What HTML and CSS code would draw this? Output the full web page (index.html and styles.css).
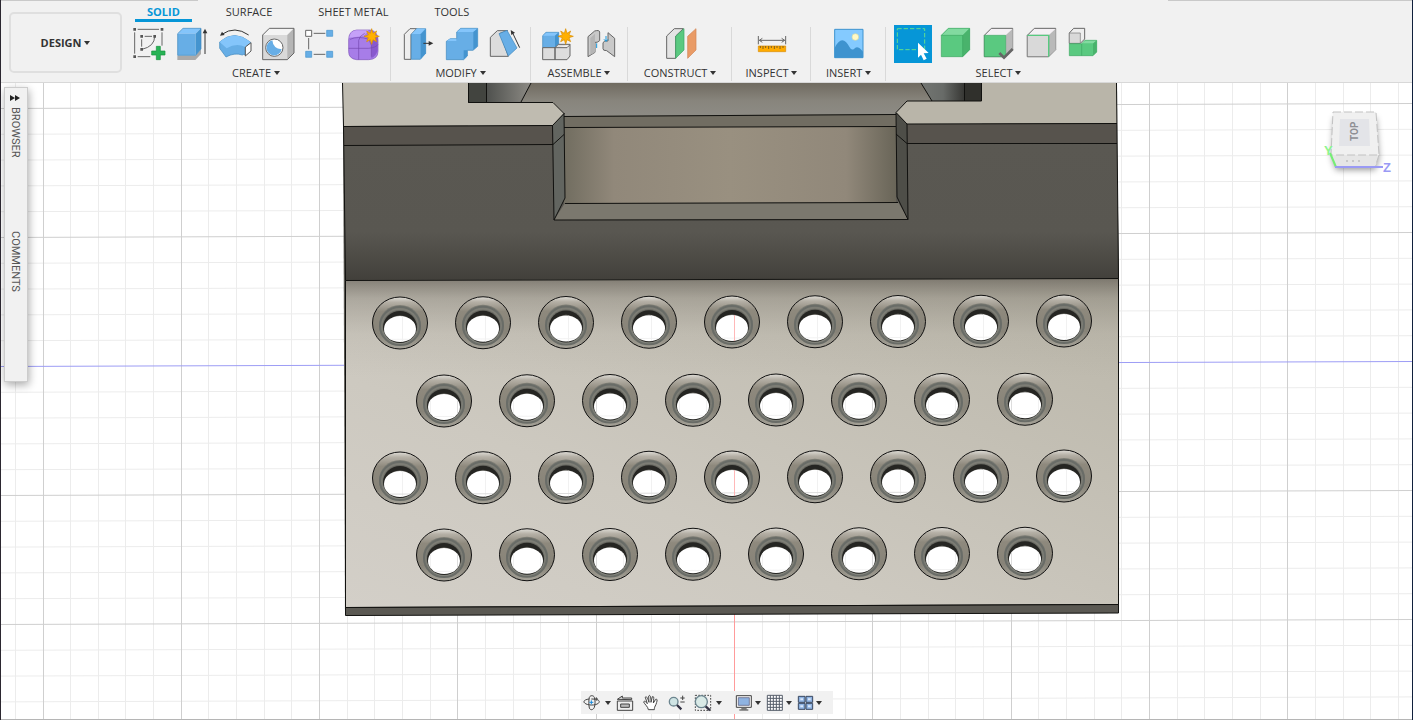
FILE: index.html
```html
<!DOCTYPE html>
<html lang="en">
<head>
<meta charset="utf-8">
<title>Design workspace</title>
<link rel="stylesheet" href="styles.css">
</head>
<body>
<div class="app">
<header class="ribbon">
  <button class="workspace" type="button">DESIGN <span class="caret"></span></button>
  <div class="ribbon-main">
    <nav class="tabs">
      <button class="tab tab-active" type="button">SOLID</button>
      <button class="tab" type="button">SURFACE</button>
      <button class="tab" type="button">SHEET METAL</button>
      <button class="tab" type="button">TOOLS</button>
    </nav>
    <div class="groups">
      <section class="group">
        <div class="tools">
          <button class="tool" type="button" aria-label="Create sketch"><svg viewBox="383 75 129 114"><path d="M415 88h64M406 97v64M488 97v40M415 170h38M427 118v22M436 109h22" class="ln"/><path d="M466 109q0 30-38 39" class="ln"/><path d="M402 84h8v8h-8zM484 84h8v8h-8zM402 166h8v8h-8zM423 105h8v8h-8zM462 105h8v8h-8zM423 144h8v8h-8z" fill="#555"/><path d="M471 139h12v14h14v12h-14v14h-12v-14h-14v-12h14z" fill="#27b355" stroke="#16933e" stroke-width="2"/></svg></button>
          <button class="tool" type="button" aria-label="Extrude"><svg viewBox="512 75 129 114"><path d="M534 167h54l17-19v14l-17 18h-54z" fill="#aaa"/><path d="M535 101l16-16h54l-16 16z" fill="#84c5fb"/><path d="M535 101h54v65h-54z" fill="#67aee6"/><path d="M589 101l16-16v62l-16 19z" fill="#4494cf"/><path d="M535 101l16-16h54v62l-16 19h-54z" fill="none" stroke="#3d87bd" stroke-width="2"/><path d="M617 162V95" class="dk"/><path d="M610 100l7-14 7 14z" fill="#333"/></svg></button>
          <button class="tool" type="button" aria-label="Revolve"><svg viewBox="641 75 129 114"><path d="M661 126q44-40 94 2l-17 15v21q-7-2-9 1-24-8-49 6l-19-26z" fill="#67aee6" stroke="#3d87bd" stroke-width="2"/><path d="M661 126q44-40 94 2l-17 13q-27-14-56 4z" fill="#84c5fb"/><path d="M738 141l17-13v25l-17 15z" fill="#fff" stroke="#555" stroke-width="3"/><path d="M668 103q38-27 80 2" class="dk"/><path d="M662 107l6-12 8 10z" fill="#333"/></svg></button>
          <button class="tool" type="button" aria-label="Hole"><svg viewBox="770 75 129 114"><path d="M790 105l20-20h74v74l-20 20h-74z" fill="#d9d9d9"/><path d="M790 105l20-20h74l-20 20z" fill="#f4f4f4"/><path d="M864 105l20-20v74l-20 20z" fill="#b5b5b5"/><path d="M790 105l20-20h74v74l-20 20h-74z" class="ln"/><circle cx="825" cy="143" r="26" fill="#fff" stroke="#666" stroke-width="3"/><path d="M819 121a23 23 0 1 0 28 27q-26-2-28-27z" fill="#67aee6"/></svg></button>
          <button class="tool" type="button" aria-label="Pattern"><svg viewBox="899 75 129 114"><path d="M943 100h35M928 114v34M943 163h35" class="ln"/><path d="M919 91h18v18h-18z" fill="#fff" stroke="#666" stroke-width="3"/><path d="M982 91h18v18h-18zM919 154h18v18h-18zM982 154h18v18h-18z" fill="#67aee6" stroke="#4494cf" stroke-width="2"/></svg></button>
          <button class="tool" type="button" aria-label="Create form"><svg viewBox="1028 75 129 114"><path d="M1048 120q0-28 24-30h40q24 4 24 30v34q0 24-28 25h-36q-24-3-24-24z" fill="#a77de8" stroke="#7c52b8" stroke-width="2"/><path d="M1049 113q5-21 23-22h36q-8 14-21 18z" fill="#c5a1f8"/><path d="M1116 113q17-8 19-2v39q-5 20-19 24z" fill="#8859ce"/><path d="M1048 145h60q24-3 28-12M1078 179v-58q2-13 18-21M1052 118q24-11 57 0l7 18v34" fill="none" stroke="#7447ae" stroke-width="2"/><path id="spark" d="M1117 86l4 14 11-7-5 12 13 4-13 4 5 12-11-6-4 14-4-14-11 6 5-12-13-4 13-4-5-12 11 7z" fill="#ffb000" stroke="#d98d00" stroke-width="2"/></svg></button>
        </div>
        <button class="group-label" type="button">CREATE <span class="caret"></span></button>
      </section>
      <section class="group">
        <div class="tools">
          <button class="tool" type="button" aria-label="Press pull"><svg viewBox="18 75 129 114"><path d="M43 103l17-17h20l-17 18v74H43z" fill="#eee" class="lnf"/><path d="M64 103l16-17h27v74l-16 18H64z" fill="#67aee6" stroke="#3d87bd" stroke-width="2"/><path d="M65 102l15-16h26l-15 16z" fill="#84c5fb"/><path d="M92 103l15-16v73l-15 17z" fill="#4494cf"/><path d="M100 130h20" class="dk"/><path d="M116 123l14 7-14 7z" fill="#333"/></svg></button>
          <button class="tool" type="button" aria-label="Combine"><svg viewBox="147 75 129 114"><path d="M169 124l12-8h19V96l12-11h51v54l-14 12h-17v17l-11 11h-52z" fill="#67aee6" stroke="#3d87bd" stroke-width="2"/><path d="M170 123l11-7h18v7zM201 96l11-10h50l-12 10z" fill="#84c5fb"/><path d="M250 96l12-10v53l-12 11zM221 151h11v17l-11 10z" fill="#4494cf"/></svg></button>
          <button class="tool" type="button" aria-label="Draft"><svg viewBox="276 75 129 114"><path d="M301 112l21-20h31l-23 8 25 69h-54z" fill="#dcdcdc" class="lnf"/><path d="M327 101l24-10 30 53-26 24z" fill="#67aee6" stroke="#3d87bd" stroke-width="2"/><path d="M389 143l-22-46" class="dk"/><path d="M362 90l13 8-11 7z" fill="#333"/></svg></button>
        </div>
        <button class="group-label" type="button">MODIFY <span class="caret"></span></button>
      </section>
      <section class="group">
        <div class="tools">
          <button class="tool" type="button" aria-label="New component"><svg viewBox="440 75 129 114"><path d="M460 107l10-10h38v36l-11 10h-37z" fill="#67aee6" stroke="#3d87bd" stroke-width="2"/><path d="M461 107l10-9h36l-11 9z" fill="#84c5fb"/><path d="M497 107l10-9v35l-10 9z" fill="#4494cf"/><path d="M460 143h37v36h-37zM497 143l10-10h35v35l-9 11h-36zM497 143h36l9-9" fill="#ddd" class="lnf"/><use href="#spark" transform="translate(-588 0)"/></svg></button>
          <button class="tool" type="button" aria-label="Joint"><svg viewBox="569 75 129 114"><path d="M596 110l20-17q14-4 15 3v26q-8 7-14 5v30l-21 13z" fill="#c9c9c9" class="lnf"/><path d="M603 114l14-13v56l-14 8z" fill="#b5b5b5"/><path d="M656 98l20 17v55l-24-18q-12 0-11-6v-18q4-8 15-5z" fill="#c9c9c9" class="lnf"/><path d="M622 130v14M650 108v16m-6-6l6 6 6-6" fill="none" stroke="#1798dd" stroke-width="3"/></svg></button>
        </div>
        <button class="group-label" type="button">ASSEMBLE <span class="caret"></span></button>
      </section>
      <section class="group single construct">
        <div class="tools">
          <button class="tool" type="button" aria-label="Offset plane"><svg viewBox="806 75 129 114"><path d="M829 108l23-22h27l-23 22v67h-27z" fill="#e4e4e4" class="lnf"/><path d="M856 109l25-23v64l-25 25z" fill="#5ac980" stroke="#38a660" stroke-width="2"/><path d="M892 109l25-23v64l-25 25z" fill="#e99b66" stroke="#d28351" stroke-width="2"/></svg></button>
        </div>
        <button class="group-label" type="button">CONSTRUCT <span class="caret"></span></button>
      </section>
      <section class="group single inspect">
        <div class="tools">
          <button class="tool" type="button" aria-label="Measure"><svg viewBox="60 75 129 114"><path d="M85 108v25M167 108v25M88 121h76M97 115l-9 6 9 6M155 115l9 6-9 6" class="ln"/><path d="M85 138h82v17H85z" fill="#ffab00" stroke="#d98b00" stroke-width="2"/><path d="M91 138v6M99 138v9M107 138v6M116 138v9M124 138v6M133 138v9M141 138v6M150 138v9M159 138v6" stroke="#806020" stroke-width="3"/></svg></button>
        </div>
        <button class="group-label" type="button">INSPECT <span class="caret"></span></button>
      </section>
      <section class="group single insert">
        <div class="tools">
          <button class="tool" type="button" aria-label="Insert image"><svg viewBox="290 75 129 114"><path d="M313 88h85v85h-85z" fill="#84caff"/><path d="M313 144q22-45 45-2 5 10 13 5 10-13 27 8v18h-85z" fill="#3e93cf"/><circle cx="375" cy="111" r="10" fill="#fff9c5" stroke="#d3daa5" stroke-width="2"/><path d="M313 88h85v85h-85z" fill="none" stroke="#3e93cf" stroke-width="3"/></svg></button>
        </div>
        <button class="group-label" type="button">INSERT <span class="caret"></span></button>
      </section>
      <section class="group">
        <div class="tools">
          <button class="tool" type="button" aria-label="Window selection" aria-pressed="true"><svg viewBox="483 75 129 114"><path d="M492 75h114v114H492z" fill="#0696d7"/><path d="M502 86h82v63h-82z" fill="none" stroke="#62de8d" stroke-width="3" stroke-dasharray="13 6"/><path d="M564 128l32 31-15 1 9 16-9 5-8-17-9 9z" fill="#fff"/></svg></button>
          <button class="tool" type="button" aria-label="Select bodies"><svg viewBox="612 75 129 114"><path d="M634 106l21-21h64v64l-21 21h-64z" fill="#5ac980"/><path d="M634 106l21-21h64l-21 21z" fill="#82daa0"/><path d="M698 106l21-21v64l-21 21z" fill="#49b36c"/><path d="M634 106l21-21h64v64l-21 21h-64zM634 106h64v64" fill="none" stroke="#3ca761" stroke-width="2"/></svg></button>
          <button class="tool" type="button" aria-label="Select faces"><svg viewBox="741 75 129 114"><path d="M763 106l21-21h64v64l-21 21h-64z" fill="#f4f0f4" class="lnf"/><path d="M827 106l21-20v63l-21 20z" fill="#b9b9b9"/><path d="M763 106h64v64h-64z" fill="#5ac980" stroke="#3ca761" stroke-width="2"/><path d="M808 159l14 14 26-26" fill="none" stroke="#666" stroke-width="8"/></svg></button>
          <button class="tool" type="button" aria-label="Select edges"><svg viewBox="870 75 129 114"><path d="M892 106l21-21h64v64l-21 21h-64z" fill="#f4f0f4" class="lnf"/><path d="M956 106l21-20v63l-21 20z" fill="#b9b9b9"/><path d="M892 106h64v64h-64z" fill="#d9d9d9" stroke="#777" stroke-width="2"/><path d="M892 106h64v64" fill="none" stroke="#58ca80" stroke-width="4"/></svg></button>
          <button class="tool" type="button" aria-label="Select components"><svg viewBox="999 75 129 114"><path d="M1018 99l13-14h33v32l-13 13h-33z" fill="#eee" class="lnf"/><path d="M1018 99h33v31h-33z" fill="#d9d9d9" stroke="#777" stroke-width="2"/><path d="M1018 131h37l10-10h35v35l-11 11h-71z" fill="#5ac980" stroke="#3ca761" stroke-width="2"/><path d="M1056 130l10-8h34l-10 8z" fill="#82daa0"/><path d="M1089 131l11-10v35l-11 10z" fill="#49b36c"/><path d="M1055 131v36" stroke="#3ca761" stroke-width="2"/></svg></button>
        </div>
        <button class="group-label" type="button">SELECT <span class="caret"></span></button>
      </section>
    </div>
  </div>
</header>

<main class="viewport">
  <svg class="scene" viewBox="0 83 1413 637" preserveAspectRatio="xMidYMin slice" role="img" aria-label="Perforated bracket model">
    <defs>
      <linearGradient id="wall" x1="0" y1="0" x2="0" y2="1"><stop offset="0" stop-color="#5a5852"/><stop offset=".65" stop-color="#595751"/><stop offset="1" stop-color="#42403b"/></linearGradient>
      <linearGradient id="plate" x1="0" y1="1" x2="1" y2="0"><stop offset="0" stop-color="#d3cfc8"/><stop offset=".35" stop-color="#cdc9c0"/><stop offset="1" stop-color="#bab6a9"/></linearGradient>
      <linearGradient id="shade" x1="0" y1="0" x2="0" y2="1"><stop offset="0" stop-color="#57524a" stop-opacity=".62"/><stop offset=".06" stop-color="#676258" stop-opacity=".3"/><stop offset=".17" stop-color="#777268" stop-opacity=".07"/><stop offset=".3" stop-color="#777268" stop-opacity="0"/></linearGradient>
      <linearGradient id="back"><stop offset="0" stop-color="#716d60"/><stop offset=".15" stop-color="#91887a"/><stop offset=".5" stop-color="#999080"/><stop offset=".85" stop-color="#91887a"/><stop offset="1" stop-color="#696558"/></linearGradient>
      <linearGradient id="floor" x1="0" y1="0" x2="0" y2="1"><stop offset="0" stop-color="#706b60"/><stop offset=".4" stop-color="#88857d"/><stop offset="1" stop-color="#91908b"/></linearGradient>
      <linearGradient id="cylL"><stop offset="0" stop-color="#4e504d"/><stop offset="1" stop-color="#8c8a84"/></linearGradient>
      <linearGradient id="cylR"><stop offset="0" stop-color="#737672"/><stop offset=".5" stop-color="#686b68"/><stop offset="1" stop-color="#353532"/></linearGradient>
      <linearGradient id="rim" x1="0" y1="0" x2="0" y2="1"><stop offset="0" stop-color="#e0ded8"/><stop offset=".1" stop-color="#b5b0a6"/><stop offset=".28" stop-color="#8e897d"/><stop offset=".7" stop-color="#878378"/><stop offset="1" stop-color="#a5a298"/></linearGradient>
      <linearGradient id="bore" x1="0" y1="0" x2="0" y2="1"><stop offset="0" stop-color="#66665f"/><stop offset="1" stop-color="#858780"/></linearGradient>
      <clipPath id="openings"></clipPath>
      <g id="hole">
        <ellipse rx="27.5" ry="26" fill="url(#rim)" stroke="#111"/>
        <ellipse cy="2" rx="21" ry="20" fill="#7d7d75"/>
        <ellipse cy="3" rx="20" ry="19" fill="none" stroke="#696c67" stroke-width="2"/>
        <ellipse cy="4" rx="18" ry="17" fill="url(#bore)"/>
        <ellipse cy="4" rx="17" ry="16" fill="#252522"/>
        <path d="M-14 0Q0-15 14 0" fill="none" stroke="#55544e"/>
        <ellipse cy="6" rx="16" ry="13" fill="#fff"/>
      </g>
    </defs>
    <rect y="83" width="1413" height="637" fill="#fff"/>
    <g id="grid"></g>
    <path d="M343 83H1117L1119 613 345 615z" fill="#595751"/>
    <path d="M468 83H982V128H468z" fill="url(#floor)"/>
    <path d="M486 83H531L521 103H486z" fill="url(#cylL)"/>
    <path d="M921 83H965V101H932z" fill="url(#cylR)"/>
    <path d="M468 83H486V103H468z" fill="#42443f"/><path d="M965 83H982V101H965z" fill="#30302c"/>
    <path d="M343 126L553 125V145L344 146zM907 124L1117 123V143L907 144z" fill="#57534d"/>
    <path d="M344 146L553 145 554 220 908 219 907 144 1117 143 1119 278 345 280z" fill="url(#wall)"/>
    <path d="M564 116L896 114V127H564z" fill="#716d62"/>
    <path d="M564 127H896V203H564z" fill="url(#back)"/>
    <path d="M565 203L898 202 908 219 554 220z" fill="#7b786e"/>
    <path d="M553 125L564 113 565 198 554 220z" fill="#626560"/>
    <path d="M896 112L907 124 908 219 897 197z" fill="#4e4e48"/>
    <path d="M343 83H468V103L553 102 564 113 553 125 343 126z" fill="#bfbbb0"/>
    <path d="M1117 83H982V101H907L896 112 907 124 1117 123z" fill="#b9b5a9"/>
    <path class="edge" fill="none" d="M342.500 83L343.500 126.500 345.500 280V615M468.500 83V102.500H553L564 113.500 552.500 125.500 343 126.500M344 145.500L553 144.500 564 134.500M552.500 125L554 220 908 219.500 907 124 896 112.500 907 101H981.500V83M907 124L1117 123.500M896 134L907 143.500 1117 143.500M564 113L565 198 554 220M896 113L897 197 908 219.500M564 116.500L896 114.500M564 127.500L896 126.500M565 203.500L898 202.500M486.500 83V102M531 83L521 102M921 83L932 101M964.500 83V101M1116.500 83L1118.500 278V613"/>
    <path d="M345.500 280.500L1118.500 278.500V604.500L345.500 607.500z" fill="url(#plate)"/>
    <path d="M345.500 280.500L1118.500 278.500V604.500L345.500 607.500z" fill="url(#shade)" class="edge"/>
    <path d="M345.500 607.500L1118.500 604.500V613L345.500 615.500z" fill="#5b5953" class="edge"/>
    <g id="holes"></g>
    <use href="#grid" clip-path="url(#openings)" opacity=".7"/>
  </svg>

  <aside class="side-panel">
    <button class="expand" type="button" aria-label="Expand panels"><svg viewBox="0 0 12 8"><path d="M1 1l5 3-5 3zM6 1l5 3-5 3z" fill="#222"/></svg></button>
    <button class="side-tab browser" type="button">BROWSER</button>
    <button class="side-tab" type="button">COMMENTS</button>
  </aside>

  <svg class="viewcube" viewBox="0 0 80 90" role="img" aria-label="View cube">
    <path d="M14 15h42l3 40-4 12H16l-4-12z" class="cube-shadow"/>
    <path d="M13 12h43l3 43H11z" fill="#f0f0f0"/>
    <path d="M11 55h48l-4 12H16z" fill="#e6e6e6"/>
    <path d="M13 12h43l3 43H11zM59 55l-4 12" fill="none" stroke="#c2c2c2" stroke-dasharray="8 3"/>
    <path d="M20 19h29l1 27H19z" fill="#e3e4e8"/>
    <text class="cube-label" transform="translate(38 41) rotate(-90)">TOP</text>
    <path d="M26 61h18" stroke="#aaa" stroke-dasharray="2 4"/>
    <path d="M10 53l6 14" stroke="#75ee75" stroke-width="2"/><path d="M15 67h48" stroke="#9a9af4" stroke-width="2"/>
    <text x="4" y="55" class="axis y">Y</text><text x="63" y="72" class="axis z">Z</text>
  </svg>

  <nav class="navbar" aria-label="Navigation">
    <button class="nav n21" type="button" aria-label="Orbit"><svg viewBox="33 18 63 69"><path d="M55 42c-13 1-20 7-14 12 8 8 32 8 41 1 5-5 3-9-4-11M73 43c-5-1-9-1-12-1M55 37c3-7 13-6 15 0 3 8 3 22 0 30-3 8-12 10-15 2-2-9-2-24 0-32" class="nl"/><path d="M61 46v12M55 52h12" stroke="#1687d8" fill="none" stroke-width="3"/><path d="M76 37v10M71 42h10" class="nl"/></svg></button>
    <button class="nav drop" type="button" aria-label="Orbit options"><span class="caret"></span></button>
    <button class="nav n24" type="button" aria-label="Look at"><svg viewBox="126 18 72 69"><path d="M139 48h46v28h-46z" fill="#eee" class="nlf"/><path d="M149 57h26v10h-26z" fill="#bbb" class="nlf"/><path d="M139 43l15-10v6h28v5z" fill="#ddd" class="nlf"/></svg></button>
    <button class="nav n28" type="button" aria-label="Pan"><svg viewBox="198 18 84 69"><path d="M232 74c0-8-12-17-14-23 1-5 7-1 11 5l-6-19c2-5 6-1 11 15l-1-19c3-4 7-2 7 19l4-17c5-2 5 3 3 19l7-11c6-2 5 4 1 15-4 8-5 10-5 16z" fill="#fff" class="nlf"/></svg></button>
    <button class="nav n26" type="button" aria-label="Zoom"><svg viewBox="282 18 78 69"><circle cx="308" cy="50" r="13" fill="#cfe4e4" stroke="#6c858f" stroke-width="4"/><path d="M318 60l13 13" stroke="#334" stroke-width="7"/><path d="M328 39h13M335 32v13M328 51h13" class="nl"/></svg></button>
    <button class="nav n23" type="button" aria-label="Fit"><svg viewBox="360 18 69 69"><path d="M373 31h46v45h-46z" class="nl" stroke-dasharray="5 4"/><circle cx="391" cy="50" r="18" fill="#d9eae7" stroke="#6c858f" stroke-width="4"/><path d="M404 64l13 12" stroke="#334" stroke-width="7"/></svg></button>
    <button class="nav drop" type="button" aria-label="Zoom options"><span class="caret"></span></button>
    <button class="nav n20 display" type="button" aria-label="Display settings"><svg viewBox="486 18 60 69"><path d="M496 32h45v35h-45z" fill="#f5f5f5" class="nlf"/><path d="M502 38h33v23h-33z" fill="#8fb3e1" stroke="#557" stroke-width="2"/><path d="M511 68h16v5h5v4h-27v-4h6z" fill="#777"/></svg></button>
    <button class="nav drop" type="button" aria-label="Display options"><span class="caret"></span></button>
    <button class="nav n21" type="button" aria-label="Grid settings"><svg viewBox="576 18 63 69"><path d="M589 31h45v45h-45zM598 31v45M607 31v45M616 31v45M625 31v45M589 40h45M589 49h45M589 58h45M589 67h45" fill="#fff" stroke="#555d69" stroke-width="3"/></svg></button>
    <button class="nav drop" type="button" aria-label="Grid options"><span class="caret"></span></button>
    <button class="nav n20" type="button" aria-label="Viewports"><svg viewBox="669 18 60 69"><path d="M682 34h20v18h-20zM705 34h20v18h-20zM682 55h20v18h-20zM705 55h20v18h-20z" fill="#8fb3e1" stroke="#394861" stroke-width="3"/><path d="M688 40h8v6h-8zM711 40h8v6h-8zM688 61h8v6h-8zM711 61h8v6h-8z" fill="#d9e7fb"/></svg></button>
    <button class="nav drop" type="button" aria-label="Viewport options"><span class="caret"></span></button>
  </nav>
</main>
</div>
<script src="scene.js"></script>
</body>
</html>
```
FILE: styles.css
```css
* { box-sizing: border-box; }
body { margin: 0; background: #fff; color: #333; font: 11px/16px "Open Sans", "Noto Sans", sans-serif; }
button { margin: 0; padding: 0; border: 0; background: none; color: inherit; font: inherit; cursor: pointer; }
.app { position: relative; display: flex; flex-direction: column; height: 100vh; overflow: hidden; }
.app::after { content: ""; position: absolute; inset: 0; z-index: 2; border-left: 1px solid #2b2730; border-right: 1px solid #10203c; pointer-events: none; }
.ribbon { display: flex; flex: none; height: 83px; background: linear-gradient(#c9c9c9, #c9c9c9) left top / 198px 1px no-repeat, linear-gradient(#c9c9c9, #c9c9c9) right top / 245px 1px no-repeat, #f1f1f1; border-bottom: 1px solid #d8d8d8; position: relative; z-index: 1; }
.workspace { flex: none; width: 113px; height: 61px; margin: 12px 0 0 9px; border: 2px solid #dfdfdf; border-radius: 5px; font-weight: 700; }
.caret { display: inline-block; border: 3px solid transparent; border-top: 4px solid #333; border-bottom: 0; vertical-align: 2px; }
.ribbon-main { min-width: 0; }
.tabs { display: flex; height: 25px; padding: 4px 0 3px 13px; gap: 22px; }
.tab { padding: 0 12px; height: 18px; line-height: 15px; border-bottom: 3px solid transparent; }
.tab-active { color: #0696d7; font-weight: 700; border-bottom-color: #0696d7; }
.groups { display: flex; }
.group { position: relative; display: flex; flex-direction: column; align-items: center; padding: 0 6px 0 5px; }
.group:not(:last-child)::after { content: ""; position: absolute; right: 0; top: 2px; bottom: 1px; width: 1px; background: #d9d9d9; }
.single { padding: 0; }
.construct { width: 104px; }
.inspect { width: 79px; }
.insert { width: 75px; }
.tools { display: flex; height: 38px; }
.tool { width: 43px; height: 38px; }
.tool svg { display: block; width: 43px; height: 38px; }
.ln { fill: none; stroke: #666; stroke-width: 3; }
.lnf { stroke: #666; stroke-width: 3; }
.dk { fill: none; stroke: #333; stroke-width: 3; }
.group-label { height: 19px; line-height: 20px; white-space: nowrap; }

.viewport { position: relative; flex: 1; min-height: 0; border-bottom: 1px solid #b5b5b5; }
.scene { display: block; width: 100%; height: 100%; }
.edge { stroke: #11110f; stroke-width: 1; }
.minor { stroke: #ececec; }
.major { stroke: #cfcfcf; }
.axis-x { stroke: #9d9df5; }
.axis-y { stroke: #ff9b9b; }

.side-panel { position: absolute; left: 4px; top: 4px; width: 24px; min-height: 295px; padding-right: 2px; display: flex; flex-direction: column; align-items: center; background: #f1f1f1; border: 1px solid #ccc; box-shadow: 1px 3px 9px #0005; }
.expand { height: 19px; }
.expand svg { display: block; width: 12px; height: 8px; }
.side-tab { writing-mode: vertical-rl; font: 11px/14px Roboto, sans-serif; color: #555; }
.browser { min-height: 124px; text-align: left; }

.viewcube { position: absolute; right: 13px; top: 17px; width: 80px; height: 90px; }
.cube-shadow { fill: #eee; filter: drop-shadow(0 3px 3px #0006); }
.cube-label { font: 700 10px Roboto, sans-serif; fill: #8e8f94; }
.axis { font: 700 13px "Liberation Sans", sans-serif; }
.y { fill: #8df58d; }
.z { fill: #9a9af4; }

.navbar { position: absolute; left: 0; right: 0; bottom: 5px; margin: 0 auto; width: fit-content; display: flex; height: 23px; padding: 0 9px 0 1px; background: #f1f1f1; }
.nav { display: flex; align-items: center; justify-content: center; height: 23px; }
.nav svg { display: block; width: 100%; height: 23px; }
.n20 { width: 20px; }
.n21 { width: 21px; }
.n23 { width: 23px; }
.n24 { width: 24px; }
.n26 { width: 26px; }
.n28 { width: 28px; }
.drop { width: 10px; }
.display { margin-left: 9px; }
.nl { fill: none; stroke: #444; stroke-width: 3; }
.nlf { stroke: #444; stroke-width: 3; }
```
FILE: scene.js
```js
const SVG = "http://www.w3.org/2000/svg";

function add(parent, tag, attrs) {
  const node = document.createElementNS(SVG, tag);
  for (const key in attrs) node.setAttribute(key, attrs[key]);
  parent.appendChild(node);
}

// Construction grid: every fifth line is major, the origin lines are coloured.
const grid = document.getElementById("grid");
const lines = [];
for (let i = -26; i <= 24; i++) {
  const x = Math.round(734 + i * 27.66) + 0.5;
  const kind = i === 0 ? "axis-y" : i % 5 === 0 ? "major" : "minor";
  lines.push([kind, { x1: x, x2: x, y1: 83, y2: 720 }]);
}
for (let i = -11; i <= 14; i++) {
  const y = 366.5 + i * 25.8;
  const kind = i === 0 ? "axis-x" : i % 5 === 0 ? "major" : "minor";
  lines.push([kind, { x1: 0, x2: 1413, y1: y, y2: y - 5 }]);
}
for (const kind of ["minor", "major", "axis-x", "axis-y"]) {
  for (const [name, attrs] of lines) {
    if (name === kind) add(grid, "line", { class: kind, ...attrs });
  }
}

// Countersunk holes in four staggered rows.
const holes = document.getElementById("holes");
const openings = document.getElementById("openings");
const rows = [[400, 323, 9], [444, 401, 8], [400, 478, 9], [444, 555, 8]];
for (const [x0, y0, count] of rows) {
  for (let i = 0; i < count; i++) {
    const x = x0 + i * 83;
    const y = y0 - i * 0.25;
    add(holes, "use", { href: "#hole", x, y });
    add(openings, "ellipse", { cx: x, cy: y + 6, rx: 16, ry: 13 });
  }
}
```
